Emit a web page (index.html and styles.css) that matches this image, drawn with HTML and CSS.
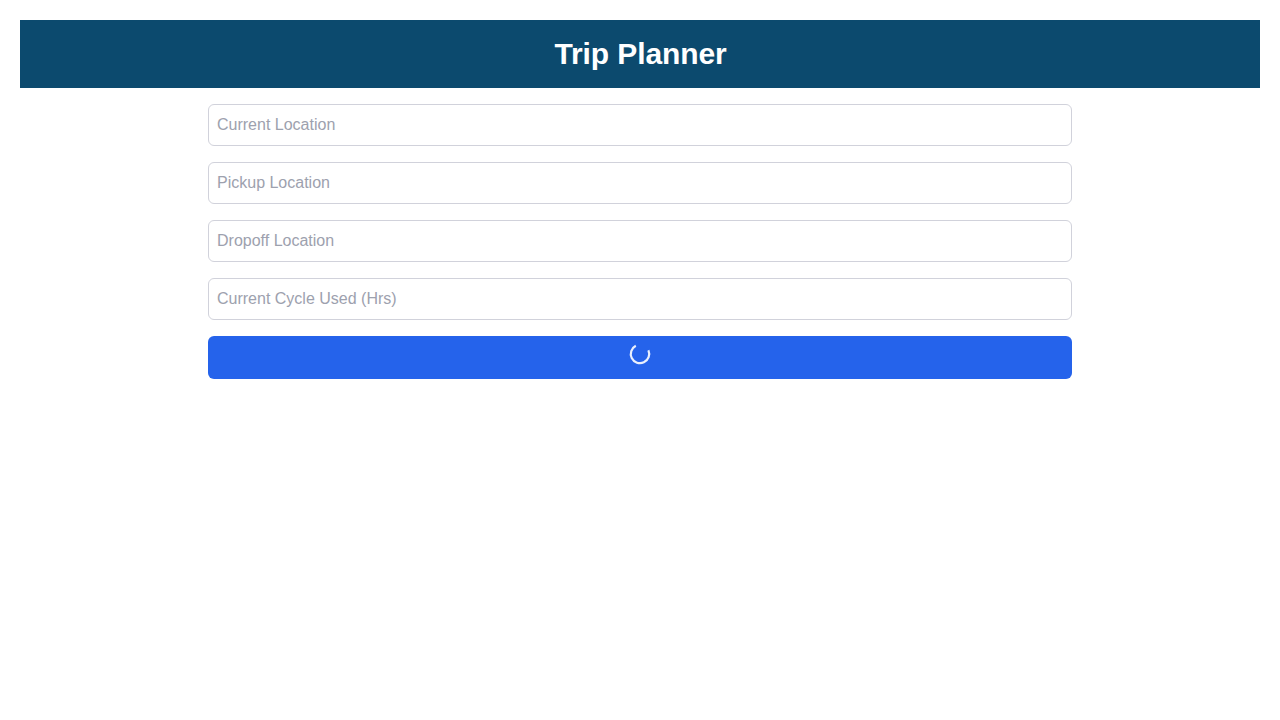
FILE: index.html
```html
<!DOCTYPE html>
<html lang="en">
<head>
  <meta charset="utf-8">
  <title>Trip Planner</title>
  <link rel="stylesheet" href="styles.css">
</head>
<body>
  <header class="header">
    <h1 class="title">Trip Planner</h1>
  </header>
  <main class="content">
    <form class="form">
      <input class="field" type="text" placeholder="Current Location">
      <input class="field" type="text" placeholder="Pickup Location">
      <input class="field" type="text" placeholder="Dropoff Location">
      <input class="field" type="text" placeholder="Current Cycle Used (Hrs)">
      <button class="submit" type="button" aria-label="Loading">
        <svg class="spinner" viewBox="0 0 20 20" aria-hidden="true">
          <path d="M18.4 6.26A9.2 9.2 0 1 1 5.82 1.8"/>
        </svg>
      </button>
    </form>
  </main>
</body>
</html>
```

FILE: styles.css
```css
* {
  box-sizing: border-box;
}

body {
  margin: 0;
  padding: 20px;
  background: #fff;
  font-family: "Liberation Sans", Arial, sans-serif;
  font-size: 16px;
  line-height: 24px;
}

.header {
  padding: 16px;
  background: #0c4a6e;
  color: #fff;
  text-align: center;
}

.title {
  margin: 0;
  font-size: 30px;
  font-weight: 700;
  line-height: 36px;
  letter-spacing: -0.1px;
  text-indent: 1px;
}

.content {
  max-width: 896px;
  margin: 0 auto;
  padding: 16px;
}

.form {
  display: flex;
  flex-direction: column;
  gap: 16px;
}

.field {
  width: 100%;
  height: 42px;
  padding: 8px;
  border: 1px solid #d1d2db;
  border-radius: 6px;
  background: transparent;
  font: inherit;
}

.field::placeholder {
  color: #9da1ae;
  opacity: 1;
}

.submit {
  display: flex;
  align-items: flex-start;
  justify-content: center;
  height: 43px;
  padding: 8px;
  border: 0;
  border-radius: 6px;
  background: #2563eb;
  color: #fff;
}

.spinner {
  width: 20px;
  height: 20px;
  overflow: visible;
  fill: none;
  stroke: currentColor;
  stroke-width: 2.2;
  opacity: 0.9;
}
```
